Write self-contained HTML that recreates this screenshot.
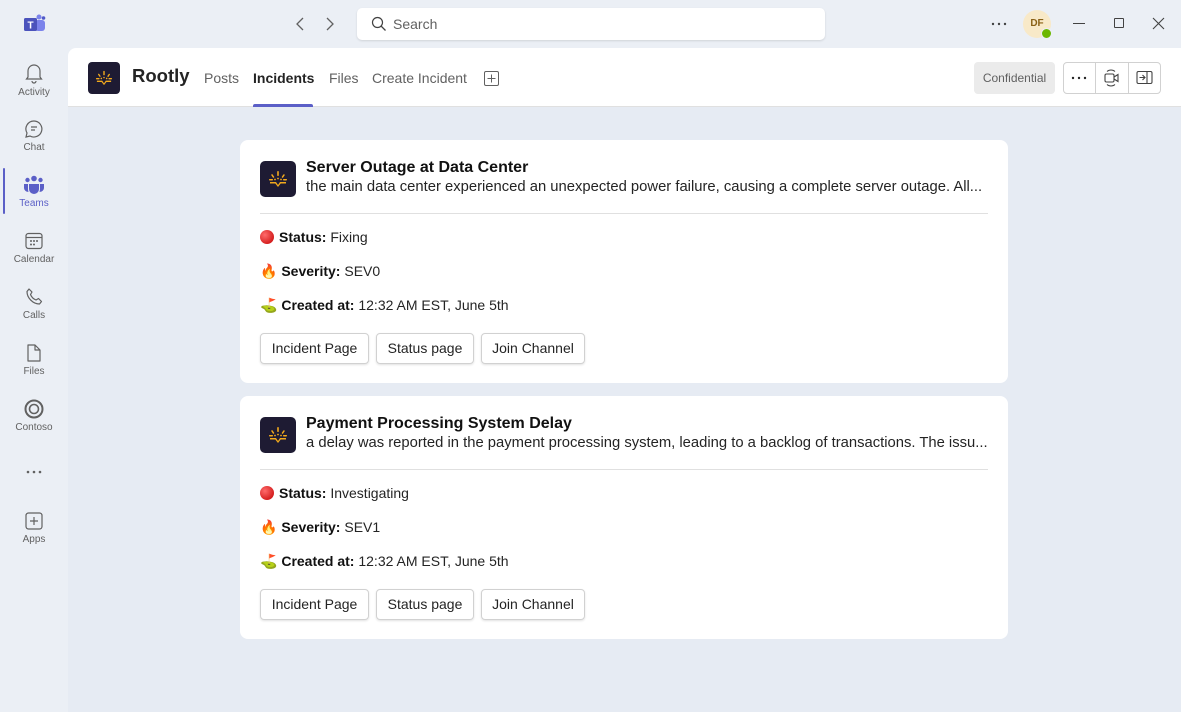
<!DOCTYPE html>
<html><head><meta charset="utf-8"><style>
*{box-sizing:border-box;margin:0;padding:0}
body{width:1181px;height:712px;overflow:hidden;background:#ebeff5;font-family:"Segoe UI","Liberation Sans",sans-serif;color:#242424;position:relative}
.abs{position:absolute}
.ri{position:absolute;left:0;width:68px;text-align:center;font-size:10px;color:#616161}
.ri svg{display:block;margin:0 auto 3px}
.main{left:68px;top:48px;width:1113px;height:664px;background:#e6ebf3;border-top-left-radius:8px;overflow:hidden}
.hdr{height:59px;background:#fff;border-bottom:1px solid #e0e0e0;position:relative}
.tab{position:absolute;top:22px;font-size:14px;color:#616161}
.card{position:absolute;left:172px;width:768px;height:243px;background:#fff;border-radius:8px}
.logo{position:absolute;left:20px;top:21px;width:36px;height:36px;background:#1e1b33;border-radius:5px}
.t{position:absolute;left:66px;top:19px;font-size:16px;font-weight:bold;color:#111}
.d{position:absolute;left:66px;top:39px;font-size:14.8px;color:#242424;white-space:nowrap}
.hr{position:absolute;left:20px;right:20px;top:73px;border-top:1px solid #e0e0e0}
.row{position:absolute;left:20px;font-size:14px;color:#242424}
.row b{color:#111}
.btn{position:absolute;top:193px;height:31px;border:1px solid #d1d1d1;border-radius:4px;font-size:14px;line-height:29px;text-align:center;box-shadow:0 1px 2px rgba(0,0,0,.12);color:#242424}
.dot{display:inline-block;width:14px;height:14px;border-radius:50%;background:radial-gradient(circle at 35% 35%,#ff6b6b,#c40000);vertical-align:-2px;margin-right:5px}
</style></head><body>
<svg class="abs" style="left:24px;top:14px" width="22" height="20" viewBox="0 0 22 20"><circle cx="15" cy="3" r="2.5" fill="#7b83eb"/><circle cx="19.5" cy="4" r="1.8" fill="#5059c9"/><rect x="11" y="6" width="10" height="11" rx="3" fill="#7b83eb"/><rect x="0" y="4" width="13" height="13" rx="1.5" fill="#4b53bc"/><text x="6.5" y="14.5" font-size="10" font-weight="bold" fill="#fff" text-anchor="middle" font-family="Liberation Sans">T</text></svg>
<svg class="abs" style="left:294px;top:16px" width="14" height="16"><path d="M9 2 L3 8 L9 14" fill="none" stroke="#616161" stroke-width="1.3"/></svg>
<svg class="abs" style="left:323px;top:16px" width="14" height="16"><path d="M4 2 L10 8 L4 14" fill="none" stroke="#616161" stroke-width="1.3"/></svg>
<div class="abs" style="left:357px;top:8px;width:468px;height:32px;background:#fff;border-radius:5px;box-shadow:0 1px 2px rgba(0,0,0,.12)"></div>
<svg class="abs" style="left:371px;top:16px" width="16" height="16"><circle cx="6.5" cy="6.5" r="5" fill="none" stroke="#424242" stroke-width="1.2"/><path d="M10 10 L14.5 14.5" stroke="#424242" stroke-width="1.3"/></svg>
<div class="abs" style="left:393px;top:16px;font-size:14px;color:#616161">Search</div>
<svg class="abs" style="left:991px;top:22px" width="16" height="4"><circle cx="2" cy="2" r="1.2" fill="#424242"/><circle cx="8" cy="2" r="1.2" fill="#424242"/><circle cx="14" cy="2" r="1.2" fill="#424242"/></svg>
<div class="abs" style="left:1023px;top:10px;width:28px;height:28px;border-radius:50%;background:#f8e9c8;font-size:10px;font-weight:bold;color:#8a6116;text-align:center;line-height:28px">DF</div>
<div class="abs" style="left:1041px;top:28px;width:11px;height:11px;border-radius:50%;background:#6bb700;border:1.5px solid #ebeff5"></div>
<div class="abs" style="left:1073px;top:23px;width:12px;border-top:1px solid #424242"></div>
<div class="abs" style="left:1114px;top:18px;width:10px;height:10px;border:1px solid #424242;border-radius:1px"></div>
<svg class="abs" style="left:1152px;top:17px" width="13" height="13"><path d="M1 1L12 12M12 1L1 12" stroke="#424242" stroke-width="1.1"/></svg>
<div class="abs" style="left:3px;top:168px;width:2px;height:46px;background:#5b5fc7;border-radius:1px"></div>
<div class="ri" style="top:62px"><svg width="20" height="22" viewBox="0 0 20 22"><path d="M4 15V9a6 6 0 0 1 12 0v6l1.5 2h-15z M8 19a2 2 0 0 0 4 0" fill="none" stroke="#616161" stroke-width="1.2"/></svg>Activity</div>
<div class="ri" style="top:119px"><svg width="20" height="20" viewBox="0 0 20 20"><path d="M10 2a8 8 0 1 1-4 15l-4 1 1-4A8 8 0 0 1 10 2z M7 8h6M7 11h4" fill="none" stroke="#616161" stroke-width="1.2"/></svg>Chat</div>
<div class="ri" style="top:175px;color:#5b5fc7"><svg width="22" height="20" viewBox="0 0 22 20"><circle cx="11" cy="3.5" r="2.8" fill="#5b5fc7"/><circle cx="4.5" cy="5" r="2.2" fill="#5b5fc7"/><circle cx="17.5" cy="5" r="2.2" fill="#5b5fc7"/><path d="M6 9h10v5a5 5 0 0 1-10 0z" fill="#5b5fc7"/><path d="M1 9h4v5c0 1 .2 2 .6 2.8A4 4 0 0 1 1 13z M21 9h-4v5c0 1-.2 2-.6 2.8A4 4 0 0 0 21 13z" fill="#5b5fc7"/></svg>Teams</div>
<div class="ri" style="top:231px"><svg width="20" height="20" viewBox="0 0 20 20"><rect x="2" y="2.5" width="16" height="15" rx="2.5" fill="none" stroke="#616161" stroke-width="1.2"/><path d="M2 6.5h16" stroke="#616161" stroke-width="1.2"/><g fill="#616161"><circle cx="7" cy="10" r="1"/><circle cx="10" cy="10" r="1"/><circle cx="13" cy="10" r="1"/><circle cx="7" cy="13.5" r="1"/><circle cx="10" cy="13.5" r="1"/></g></svg>Calendar</div>
<div class="ri" style="top:287px"><svg width="20" height="20" viewBox="0 0 20 20"><path d="M5 2l3 3-1.5 2.5c1 2.5 3 4.5 5.5 5.5L14.5 11.5l3 3-2 2.5C9 17 3 11 3 4.5z" fill="none" stroke="#616161" stroke-width="1.2" stroke-linejoin="round"/></svg>Calls</div>
<div class="ri" style="top:343px"><svg width="20" height="20" viewBox="0 0 20 20"><path d="M4 2h7l5 5v11H4z M11 2v5h5" fill="none" stroke="#616161" stroke-width="1.2" stroke-linejoin="round"/></svg>Files</div>
<div class="ri" style="top:399px"><svg width="22" height="20" viewBox="0 0 22 20"><circle cx="11" cy="10" r="8.5" fill="none" stroke="#616161" stroke-width="2"/><circle cx="11" cy="10" r="4.5" fill="none" stroke="#616161" stroke-width="1.6"/></svg>Contoso</div>
<svg class="abs" style="left:26px;top:470px" width="16" height="4"><circle cx="2" cy="2" r="1.3" fill="#616161"/><circle cx="8" cy="2" r="1.3" fill="#616161"/><circle cx="14" cy="2" r="1.3" fill="#616161"/></svg>
<div class="ri" style="top:511px"><svg width="20" height="20" viewBox="0 0 20 20"><rect x="2" y="2" width="16" height="16" rx="2.5" fill="none" stroke="#616161" stroke-width="1.2"/><path d="M10 6v8M6 10h8" stroke="#616161" stroke-width="1.2"/></svg>Apps</div>
<div class="abs main">
 <div class="hdr">
  <div style="position:absolute;left:20px;top:14px;width:32px;height:32px;background:#1e1b33;border-radius:4px"><svg width="32" height="32" viewBox="0 0 36 36"><g fill="#f2a91c"><path d="M10 21h6l2 3 2-3h6v1.5h-5.3L18 26l-2.7-3.5H10z"/><rect x="17.2" y="10" width="1.6" height="5" rx=".8"/><rect x="12" y="13" width="1.5" height="4" rx=".7" transform="rotate(-35 12.7 15)"/><rect x="22.5" y="13" width="1.5" height="4" rx=".7" transform="rotate(35 23.2 15)"/><rect x="9" y="18" width="4" height="1.5" rx=".7"/><rect x="23" y="18" width="4" height="1.5" rx=".7"/><circle cx="15" cy="18.5" r=".9"/><circle cx="21" cy="18.5" r=".9"/><circle cx="18" cy="17.5" r=".9"/></g></svg></div>
  <div style="position:absolute;left:64px;top:17px;font-size:18.5px;font-weight:bold;color:#242424">Rootly</div>
  <div class="tab" style="left:136px">Posts</div>
  <div class="tab" style="left:185px;color:#242424;font-weight:bold">Incidents</div>
  <div style="position:absolute;left:185px;top:56px;width:60px;height:3px;background:#5b5fc7;border-radius:2px 2px 0 0"></div>
  <div class="tab" style="left:261px">Files</div>
  <div class="tab" style="left:304px">Create Incident</div>
  <svg style="position:absolute;left:416px;top:23px" width="16" height="16"><rect x=".5" y=".5" width="14" height="14" rx="1.5" fill="none" stroke="#616161"/><path d="M7.5 3.5v8M3.5 7.5h8" stroke="#616161"/></svg>
  <div style="position:absolute;left:906px;top:14px;width:81px;height:32px;background:#ebebeb;border-radius:4px;font-size:12px;color:#616161;text-align:center;line-height:32px">Confidential</div>
  <div style="position:absolute;left:995px;top:14px;width:98px;height:32px;border:1px solid #d1d1d1;border-radius:4px"></div>
  <div style="position:absolute;left:1027px;top:15px;height:30px;border-left:1px solid #d1d1d1"></div>
  <div style="position:absolute;left:1060px;top:15px;height:30px;border-left:1px solid #d1d1d1"></div>
  <svg style="position:absolute;left:1003px;top:28px" width="16" height="4"><circle cx="2" cy="2" r="1.2" fill="#242424"/><circle cx="8" cy="2" r="1.2" fill="#242424"/><circle cx="14" cy="2" r="1.2" fill="#242424"/></svg>
  <svg style="position:absolute;left:1035px;top:21px" width="18" height="18"><rect x="2" y="5" width="9" height="8" rx="1.5" fill="none" stroke="#424242" stroke-width="1.1"/><path d="M11 8l4-2.5v7L11 10" fill="none" stroke="#424242" stroke-width="1.1"/><path d="M4 2.5a6 6 0 0 1 8 0M4 15.5a6 6 0 0 0 8 0" fill="none" stroke="#424242" stroke-width="1"/></svg>
  <svg style="position:absolute;left:1068px;top:22px" width="18" height="16"><rect x="1" y="1.5" width="15" height="12" rx="1.5" fill="none" stroke="#424242" stroke-width="1.1"/><path d="M11 1.5v12M3.5 7.5h5M6.5 5l2.5 2.5L6.5 10" fill="none" stroke="#424242" stroke-width="1.1"/></svg>
 </div>
</div>
<div class="card" style="left:240px;top:140px">
 <div class="logo"><svg width="36" height="36" viewBox="0 0 36 36"><g fill="#f2a91c"><path d="M10 21h6l2 3 2-3h6v1.5h-5.3L18 26l-2.7-3.5H10z"/><rect x="17.2" y="10" width="1.6" height="5" rx=".8"/><rect x="12" y="13" width="1.5" height="4" rx=".7" transform="rotate(-35 12.7 15)"/><rect x="22.5" y="13" width="1.5" height="4" rx=".7" transform="rotate(35 23.2 15)"/><rect x="9" y="18" width="4" height="1.5" rx=".7"/><rect x="23" y="18" width="4" height="1.5" rx=".7"/><circle cx="15" cy="18.5" r=".9"/><circle cx="21" cy="18.5" r=".9"/><circle cx="18" cy="17.5" r=".9"/></g></svg></div>
 <div class="t">Server Outage at Data Center</div>
 <div class="d">the main data center experienced an unexpected power failure, causing a complete server outage. All...</div>
 <div class="hr"></div>
 <div class="row" style="top:89px"><span class="dot"></span><b>Status:</b> Fixing</div>
 <div class="row" style="top:123px">🔥 <b>Severity:</b> SEV0</div>
 <div class="row" style="top:157px">⛳ <b>Created at:</b> 12:32 AM EST, June 5th</div>
 <div class="btn" style="left:20px;width:109px">Incident Page</div>
 <div class="btn" style="left:136px;width:98px">Status page</div>
 <div class="btn" style="left:241px;width:104px">Join Channel</div>
</div>
<div class="card" style="left:240px;top:396px">
 <div class="logo"><svg width="36" height="36" viewBox="0 0 36 36"><g fill="#f2a91c"><path d="M10 21h6l2 3 2-3h6v1.5h-5.3L18 26l-2.7-3.5H10z"/><rect x="17.2" y="10" width="1.6" height="5" rx=".8"/><rect x="12" y="13" width="1.5" height="4" rx=".7" transform="rotate(-35 12.7 15)"/><rect x="22.5" y="13" width="1.5" height="4" rx=".7" transform="rotate(35 23.2 15)"/><rect x="9" y="18" width="4" height="1.5" rx=".7"/><rect x="23" y="18" width="4" height="1.5" rx=".7"/><circle cx="15" cy="18.5" r=".9"/><circle cx="21" cy="18.5" r=".9"/><circle cx="18" cy="17.5" r=".9"/></g></svg></div>
 <div class="t">Payment Processing System Delay</div>
 <div class="d">a delay was reported in the payment processing system, leading to a backlog of transactions. The issu...</div>
 <div class="hr"></div>
 <div class="row" style="top:89px"><span class="dot"></span><b>Status:</b> Investigating</div>
 <div class="row" style="top:123px">🔥 <b>Severity:</b> SEV1</div>
 <div class="row" style="top:157px">⛳ <b>Created at:</b> 12:32 AM EST, June 5th</div>
 <div class="btn" style="left:20px;width:109px">Incident Page</div>
 <div class="btn" style="left:136px;width:98px">Status page</div>
 <div class="btn" style="left:241px;width:104px">Join Channel</div>
</div>
</body></html>
